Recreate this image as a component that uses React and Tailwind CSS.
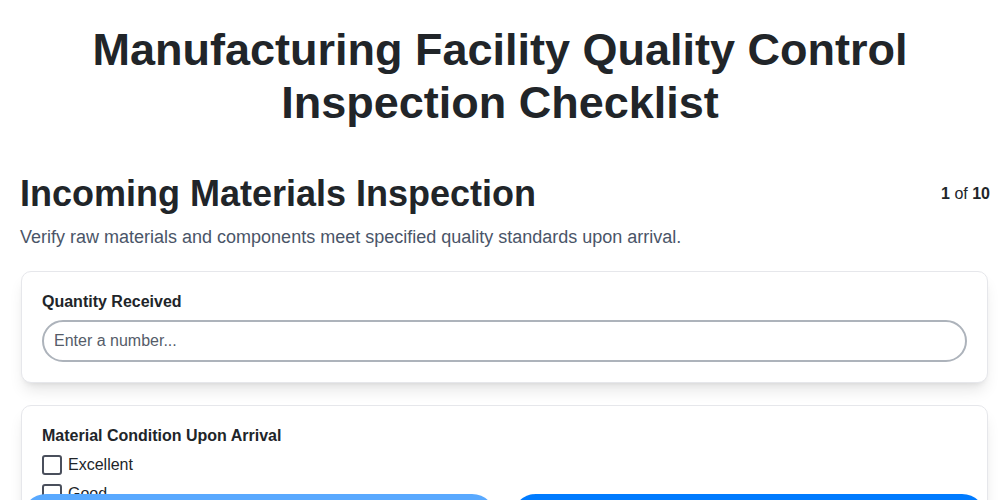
import React, { useState } from "react";

const conditions = ["Excellent", "Good", "Fair", "Poor", "Damaged"];

const App = () => {
  const [quantity, setQuantity] = useState("");
  const [checked, setChecked] = useState([]);

  const toggle = (item) => {
    setChecked((prev) =>
      prev.includes(item) ? prev.filter((c) => c !== item) : [...prev, item]
    );
  };

  return (
    <div className="min-h-screen bg-white text-[#212529] font-['Liberation_Sans',Arial,sans-serif]">
      {/* Page title */}
      <h1 className="pt-[23px] text-center text-[45px] leading-[53px] font-bold">
        Manufacturing Facility Quality Control
        <br />
        Inspection Checklist
      </h1>

      <div className="pl-5 pr-[10px] pb-24">
        {/* Section header */}
        <div className="mt-[43px] flex items-center justify-between">
          <h2 className="text-[36px] leading-[1.2] font-bold">Incoming Materials Inspection</h2>
          <div className="text-base">
            <span className="font-bold">1</span> of <span className="font-bold">10</span>
          </div>
        </div>
        <p className="mt-[9px] mb-[20px] text-lg leading-[1.5] text-[#4a5568]">
          Verify raw materials and components meet specified quality standards upon arrival.
        </p>

        {/* Questions */}
        <div className="flex flex-col gap-[22px] pl-px pr-[2px]">
          <div className="rounded-[10px] border border-[#e6e7eb] bg-white p-5 shadow-lg">
            <label className="mb-[9px] block text-base leading-[1.2] font-bold">Quantity Received</label>
            <input
              type="number"
              value={quantity}
              onChange={(e) => setQuantity(e.target.value)}
              placeholder="Enter a number..."
              className="block h-[42px] w-full rounded-full border-2 border-[#adb3bb] px-[10px] text-base text-[#212529] placeholder:text-[#555c69] outline-none"
            />
          </div>

          <div className="rounded-[10px] border border-[#e6e7eb] bg-white p-5 shadow-lg">
            <div className="mb-[7px] text-base leading-[1.2] font-bold">Material Condition Upon Arrival</div>
            <div className="flex flex-col gap-[5px]">
              {conditions.map((c) => (
                <label key={c} className="flex h-6 cursor-pointer items-center gap-[6px] text-base">
                  <span
                    onClick={() => toggle(c)}
                    className={
                      checked.includes(c)
                        ? "h-5 w-5 rounded-[3px] border-2 border-[#007bff] bg-[#007bff]"
                        : "h-5 w-5 rounded-[3px] border-2 border-[#4a4f5c] bg-white"
                    }
                  />
                  <span>{c}</span>
                </label>
              ))}
            </div>
          </div>
        </div>
      </div>

      {/* Footer nav */}
      <div className="fixed top-[494px] left-[22px] flex w-[964px] gap-4">
        <button className="h-12 flex-1 rounded-full bg-[#59a9ff] text-base font-bold text-white">
          Previous
        </button>
        <button className="h-12 flex-1 rounded-full bg-[#007bff] text-base font-bold text-white">
          Next
        </button>
      </div>
    </div>
  );
};

export default App;
